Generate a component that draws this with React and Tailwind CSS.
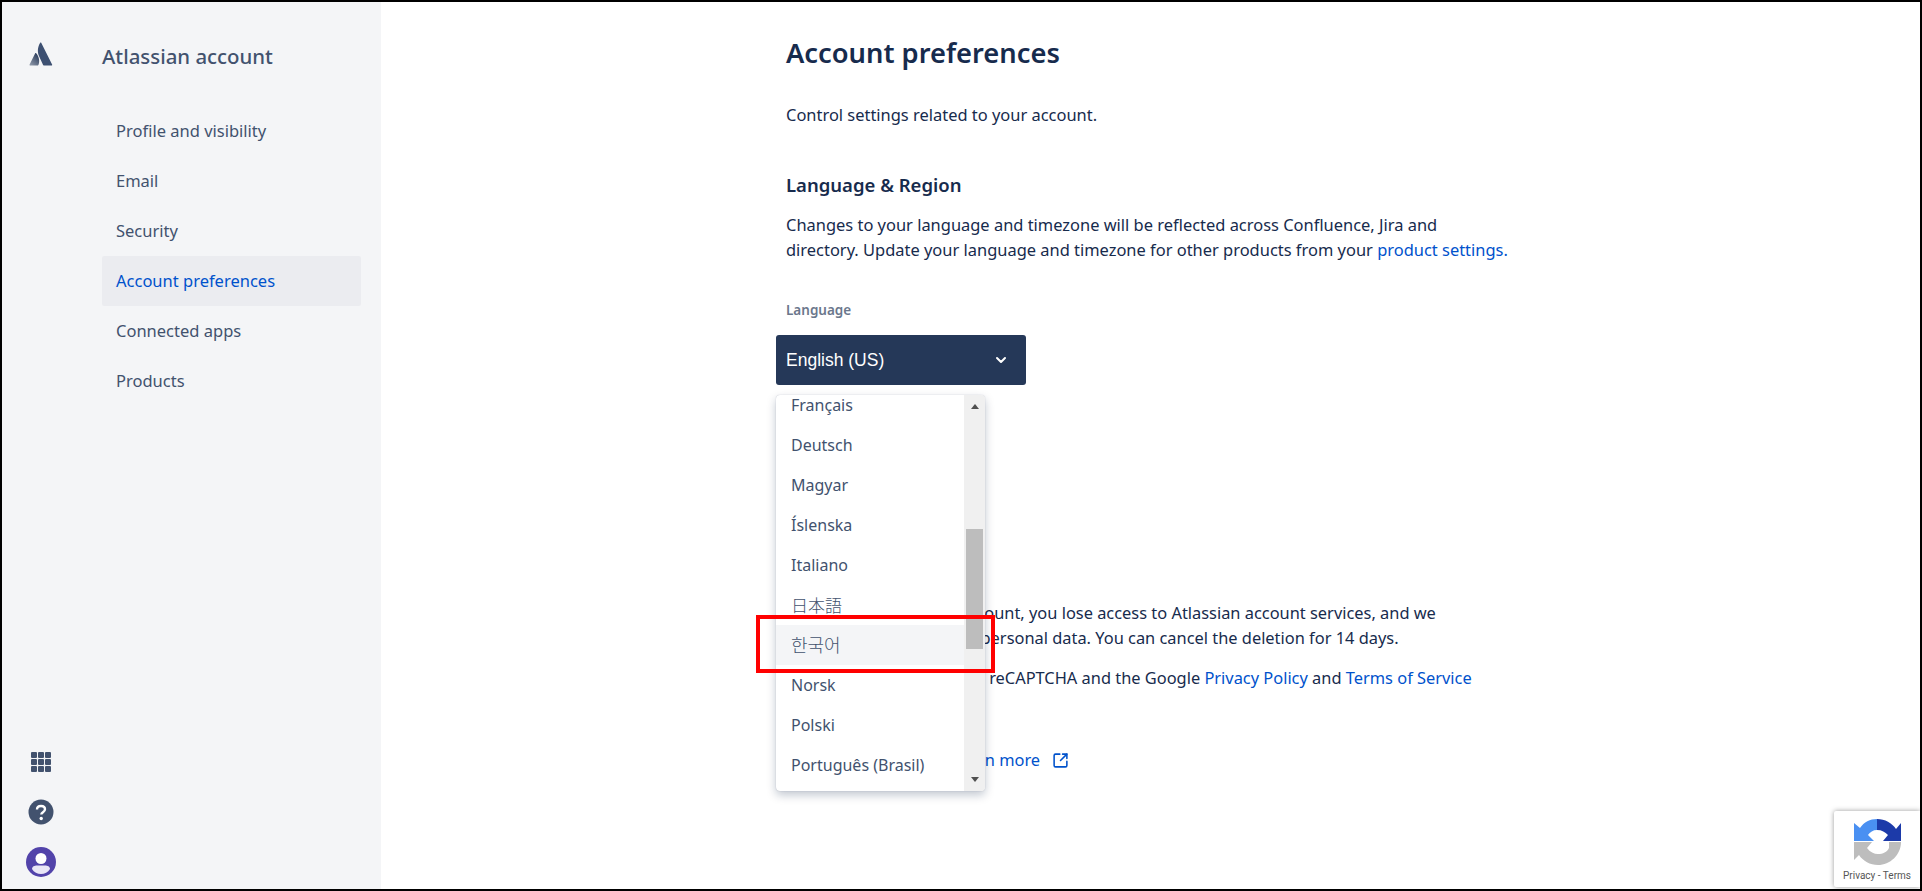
import React from "react";
import { ChevronDown, SquareArrowOutUpRight } from "lucide-react";

const font = { fontFamily: '"Noto Sans", "Noto Sans CJK KR", sans-serif' };
const nav = ["Profile and visibility", "Email", "Security", "Account preferences", "Connected apps", "Products"];
const langs = [
  ["Français"], ["Deutsch"], ["Magyar"], ["Íslenska"], ["Italiano"],
  ["日本語", "ja"], ["한국어", "ko"], ["Norsk"], ["Polski"], ["Português (Brasil)"],
];

function Logo() {
  return (
    <svg width="24" height="24" viewBox="0 0 24 24">
      <defs>
        <linearGradient id="lg" x1="0.8" y1="0.2" x2="0.2" y2="1">
          <stop offset="0" stopColor="#344563" />
          <stop offset="1" stopColor="#8993A4" />
        </linearGradient>
      </defs>
      <path d="M7.2 11.2c-.3-.4-.8-.3-1 .1L.6 22.4c-.2.5.1 1 .6 1h7.6c.3 0 .5-.1.6-.4 1.6-3.400.7-8.500-2.200-11.800z" fill="url(#lg)" />
      <path d="M11.200.8c-3 4.800-2.800 10.100-1 13.800l3.900 8.400c.1.300.4.400.6.400h7.800c.5 0 .9-.5.600-1L12.200.8c-.2-.4-.8-.4-1 0z" fill="#3D5072" />
    </svg>
  );
}

function Apps() {
  const cells = Array.from({ length: 9 });
  return (
    <div className="grid w-[20px] grid-cols-3 gap-[1px]">
      {cells.map((_, i) => (
        <div key={i} className="h-[6px] w-[6px] rounded-[1px] bg-[#42526E]" />
      ))}
    </div>
  );
}

function Help() {
  return (
    <svg width="26" height="26" viewBox="0 0 26 26">
      <circle cx="13" cy="13" r="12.500" fill="#42526E" />
      <path d="M9 10.500c0-2.300 1.800-3.500 4-3.500s4 1.200 4 3.300c0 3-3.700 2.800-3.700 5.200" fill="none" stroke="#fff" strokeWidth="2.400" />
      <circle cx="13.200" cy="19.500" r="1.700" fill="#fff" />
    </svg>
  );
}

function Avatar() {
  return (
    <svg width="30" height="30" viewBox="0 0 30 30">
      <circle cx="15" cy="15" r="15" fill="#5243AA" />
      <circle cx="15" cy="11.500" r="5.500" fill="#fff" />
      <path d="M6 22c0-2.500 2.500-3.500 5-3.500h8c2.500 0 5 1 5 3.500-2 3.300-5.300 5-9 5s-7-1.700-9-5z" fill="#E9E6F6" />
    </svg>
  );
}

function Recaptcha() {
  return (
    <svg width="47" height="46" viewBox="0 0 47 46">
      <path d="M23 0 V11 C19 11 16 13 14 16 L20 22 H0 V4 L6 9 C10 3 16 0 23 0 Z" fill="#4A90F2" />
      <path d="M23 0 C31 0 38 4 42 10 L47 4 V22 H29 L34 16 C31 13 28 11 23 11 Z" fill="#1C3AA9" />
      <path d="M0 23 H18 L13 29 C16 33 20 35 24 35 C29 35 33 33 35 29 V23 H47 C47 36 36 46 24 46 C16 46 9 42 5 36 L0 41 Z" fill="#BDBDBD" />
    </svg>
  );
}

export default function App() {
  return (
    <div className="relative flex h-[891px] w-[1922px] overflow-hidden border-2 border-black bg-white text-[#172B4D]" style={font}>
      <aside className="flex w-[379px] shrink-0 bg-[#F4F5F7]">
        <div className="flex w-[100px] shrink-0 flex-col items-center pt-[40px] pb-[12px] pr-[22px]">
          <Logo />
          <div className="mt-auto flex flex-col items-center">
            <Apps />
            <div className="mt-[27px]"><Help /></div>
            <div className="mt-[22px]"><Avatar /></div>
          </div>
        </div>
        <div className="flex-1 pr-[20px]">
          <div className="pt-[40px] text-[20.4px] leading-[29px] font-medium text-[#42526E]">Atlassian account</div>
          <nav className="mt-[35px] flex flex-col">
            {nav.map((n) => {
              const active = n === "Account preferences";
              return (
                <div
                  key={n}
                  className={
                    active
                      ? "flex h-[50px] items-center rounded-[2px] bg-[#EBECF0] px-[14px] text-[16.5px] text-[#0052CC]"
                      : "flex h-[50px] items-center px-[14px] text-[16.5px] text-[#42526E]"
                  }
                >
                  {n}
                </div>
              );
            })}
          </nav>
        </div>
      </aside>

      <main className="flex-1 pl-[405px]">
        <h1 className="pt-[31px] text-[27.3px] leading-[40px] font-semibold">Account preferences</h1>
        <p className="mt-[30px] text-[16.45px] leading-[24px]">Control settings related to your account.</p>
        <h2 className="mt-[44px] text-[18.500px] leading-[28px] font-semibold">Language &amp; Region</h2>
        <p className="mt-[13px] w-[760px] text-[16.45px] leading-[25px]">
          Changes to your language and timezone will be reflected across Confluence, Jira and
          <br />
          directory. Update your language and timezone for other products from your{" "}
          <span className="text-[#0052CC]">product settings.</span>
        </p>
        <div className="mt-[39px] text-[13.5px] leading-[18px] font-semibold text-[#6B778C]">Language</div>
        <div className="mt-[16px] -ml-[10px] flex h-[50px] w-[250px] items-center justify-between rounded-[3px] bg-[#253858] pl-[10px] pr-[17px] text-white">
          <span className="text-[17.5px]" style={{ fontFamily: '"Liberation Sans", sans-serif' }}>English (US)</span>
          <ChevronDown size={16} strokeWidth={3} />
        </div>
        <h2 className="mt-[174px] text-[18.500px] leading-[28px] font-semibold">Delete your account</h2>
        <p className="mt-[13px] w-[760px] text-[16.4px] leading-[25px]">
          When you delete your account, you lose access to Atlassian account services, and we
          <br />
          permanently delete your personal data. You can cancel the deletion for 14 days.
        </p>
        <p className="mt-[15px] w-[760px] text-[16.4px] leading-[25px]">
          <span className="mr-[7px]">This page is protected by</span> reCAPTCHA and the Google{" "}
          <span className="text-[#0052CC]">Privacy Policy</span> and{" "}
          <span className="text-[#0052CC]">Terms of Service</span>
          <br />
          apply.
        </p>
        <div className="mt-[32px] flex items-center gap-[12px] pl-[165px] text-[16.4px] leading-[26px] text-[#0052CC]">
          <span>Learn more</span>
          <SquareArrowOutUpRight size={17} strokeWidth={2.2} />
        </div>
      </main>

      {/* Language dropdown, open over the page */}
      <div className="absolute left-[774px] top-[393px] flex h-[396px] w-[209px] overflow-hidden rounded-[4px] bg-white shadow-[0_4px_10px_rgba(9,30,66,0.25),0_0_1px_rgba(9,30,66,0.31)]">
        <ul className="-mt-[10px] flex-1 text-[16px] text-[#42526E]">
          {langs.map(([l, lang]) => (
            <li
              key={l}
              lang={lang}
              className={
                l === "한국어"
                  ? "flex h-[40px] items-center bg-[#F4F5F7] px-[15px] text-[18px] font-light"
                  : lang
                    ? "flex h-[40px] items-center px-[15px] text-[17px] font-light"
                    : "flex h-[40px] items-center px-[15px]"
              }
              style={lang === "ja" ? { fontFamily: '"Noto Sans CJK JP", sans-serif' } : undefined}
            >
              {l}
            </li>
          ))}
        </ul>
        <div className="flex w-[21px] shrink-0 flex-col items-center bg-[#F0F0F0]">
          <div className="mt-[9px] h-0 w-0 border-x-[4px] border-b-[5px] border-x-transparent border-b-[#505050]" />
          <div className="mt-[120px] h-[120px] w-[17px] bg-[#BDBDBD]" />
          <div className="mt-[128px] h-0 w-0 border-x-[4px] border-t-[5px] border-x-transparent border-t-[#505050]" />
        </div>
      </div>

      {/* Red annotation box */}
      <div className="absolute left-[754px] top-[613px] h-[58px] w-[239px] border-[4px] border-[#FF0000]" />

      {/* reCAPTCHA badge */}
      <div className="absolute bottom-[2px] right-0 flex h-[76px] w-[86px] flex-col items-center rounded-l-[2px] bg-white pt-[8px] shadow-[0_0_5px_rgba(128,128,128,0.8)]">
        <Recaptcha />
        <span className="mt-[5px] whitespace-nowrap text-[10px] leading-[12px] text-[#555]" style={{ fontFamily: '"Roboto", sans-serif' }}>Privacy - Terms</span>
      </div>
    </div>
  );
}
